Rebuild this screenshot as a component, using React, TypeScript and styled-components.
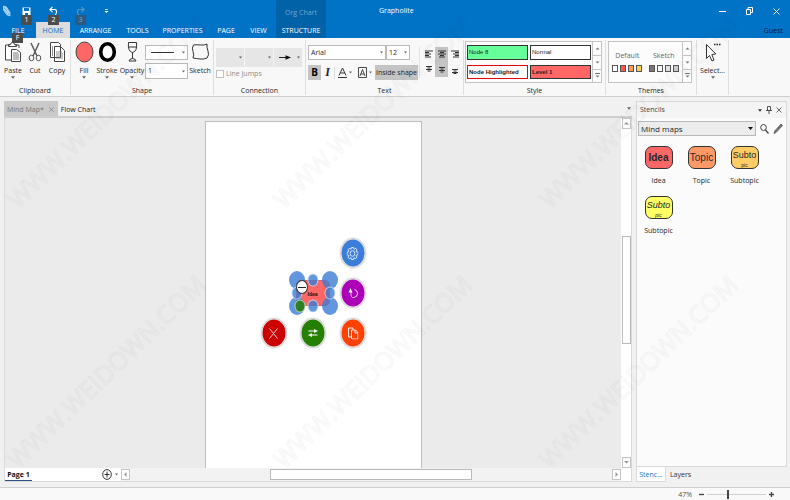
import React from "react";
import styled, { createGlobalStyle, css } from "styled-components";

const Global = createGlobalStyle`
  *, *::before, *::after { box-sizing: border-box; }
  body { margin: 0; font-family: "Open Sans", sans-serif; font-size: 7px; line-height: 10px; color: #262626; }
  button, input, select { font: inherit; color: inherit; margin: 0; padding: 0; }
  button { border: 0; background: none; white-space: nowrap; }
  svg { display: block; flex: none; }
  h2 { margin: 0; font: inherit; }
`;

const Window = styled.div`
  position: relative;
  display: flex;
  flex-direction: column;
  min-height: 100vh;
  background: #f1f1f1;
  overflow: hidden;
`;

/* ---------- title bar ---------- */
const Header = styled.header`
  display: flex;
  height: 38px;
  background: #0173c7;
  color: #fff;
`;
const HeaderStart = styled.div`
  display: flex;
  flex-direction: column;
  width: 276px;
`;
const HeaderRow = styled.div`
  display: flex;
  align-items: center;
  height: 22px;
`;
const QuickButton = styled.button<{ $dim?: boolean; $w?: number }>`
  position: relative;
  display: grid;
  place-items: center;
  width: ${(p) => p.$w ?? 27}px;
  height: 20px;
  color: ${(p) => (p.$dim ? "#5795c4" : "#fff")};
`;
const KeyTip = styled.span<{ $dim?: boolean; $low?: boolean }>`
  position: absolute;
  top: ${(p) => (p.$low ? 11 : 14)}px;
  left: ${(p) => (p.$low ? 12 : 8)}px;
  width: 11px;
  height: 10px;
  background: ${(p) => (p.$dim ? "#2d5a80" : "#4c4c4c")};
  color: ${(p) => (p.$dim ? "#7fa5c4" : "#fff")};
  font-size: 7px;
  line-height: 10px;
  text-align: center;
  z-index: 1;
`;
const Tabs = styled.nav`
  display: flex;
  height: 16px;
`;
const RibbonTab = styled.button<{ $w: number; $active?: boolean }>`
  position: relative;
  width: ${(p) => p.$w}px;
  height: 16px;
  font-size: 7px;
  line-height: 18px;
  text-align: center;
  background: ${(p) => (p.$active ? "#dcdcdc" : "transparent")};
  color: ${(p) => (p.$active ? "#0173c7" : "#fff")};
`;
const ContextTabs = styled.div`
  display: flex;
  flex-direction: column;
  width: 50px;
  background: #0262a7;
  text-align: center;
`;
const ContextTitle = styled.span`
  height: 22px;
  line-height: 25px;
  color: #71a8d2;
`;
const AppTitle = styled.div`
  flex: 1;
  padding-left: 53px;
  line-height: 22px;
`;
const HeaderEnd = styled.div`
  display: flex;
  flex-direction: column;
  align-items: flex-end;
`;
const WindowButton = styled.button`
  display: grid;
  place-items: center;
  width: 27px;
  height: 21px;
  color: #fff;
`;
const UserButton = styled.button`
  display: flex;
  align-items: center;
  gap: 3px;
  height: 16px;
  padding: 2px 1px 0 0;
  color: #101c2c;
`;

/* ---------- ribbon ---------- */
const Ribbon = styled.section`
  display: flex;
  height: 59px;
  padding-top: 2px;
  background: #f8f8f8;
  border-bottom: 1px solid #cfcfcf;
`;
const Group = styled.section<{ $w: number }>`
  display: flex;
  flex-direction: column;
  flex: none;
  width: ${(p) => p.$w}px;
  height: 55px;
  border-right: 1px solid #dedede;
`;
const GroupBody = styled.div<{ $pad?: number }>`
  display: flex;
  flex: none;
  height: 45px;
  padding-left: ${(p) => p.$pad ?? 1}px;
`;
const GroupTitle = styled.h2`
  line-height: 12px;
  text-align: center;
`;
const Tool = styled.button<{ $w: number }>`
  display: flex;
  flex-direction: column;
  align-items: center;
  width: ${(p) => p.$w}px;
  padding-top: 1px;
`;
const ToolIcon = styled.span`
  display: grid;
  place-items: center;
  height: 22px;
`;
const ToolLabel = styled.span`
  height: 13px;
  line-height: 15px;
`;
const Stack = styled.div<{ $gap?: number; $top?: number }>`
  display: flex;
  flex-direction: column;
  gap: ${(p) => p.$gap ?? 3}px;
  padding-top: ${(p) => p.$top ?? 5}px;
`;
const Row = styled.div`
  display: flex;
  align-items: center;
`;
const SelectBox = styled.label<{ $w?: number; $h: number; $tone?: "flat" | "grey" }>`
  display: grid;
  align-items: center;
  ${(p) => (p.$w ? `width: ${p.$w}px;` : "flex: 1;")}
  height: ${(p) => p.$h}px;
  border: 1px solid #b9b9b9;
  background: #fff;
  ${(p) =>
    p.$tone === "flat" &&
    css`
      background: #e6e6e6;
      border-color: #e6e6e6 #f4f4f4 #e6e6e6 #e6e6e6;
    `}
  ${(p) =>
    p.$tone === "grey" &&
    css`
      background: #ececec;
    `}
  & > * { grid-area: 1 / 1; }
  & > svg:last-child { justify-self: end; margin-right: 2px; pointer-events: none; }
`;
const SelectInput = styled.select<{ $big?: boolean }>`
  appearance: none;
  width: 100%;
  height: 100%;
  border: 0;
  padding: 0 2px;
  background: transparent;
  font-size: ${(p) => (p.$big ? 8 : 7)}px;
`;
const LineSample = styled.svg`
  margin-left: 4px;
  pointer-events: none;
`;
const CheckLabel = styled.label`
  display: flex;
  align-items: center;
  gap: 2px;
  color: #8d8d8d;
`;
const Check = styled.input`
  appearance: none;
  width: 8px;
  height: 8px;
  border: 1px solid #c3c3c3;
  background: #fbfbfb;
`;
const TextButton = styled.button<{ $w: number; $on?: boolean }>`
  display: flex;
  align-items: center;
  justify-content: center;
  gap: 2px;
  width: ${(p) => p.$w}px;
  height: 15px;
  background: ${(p) => (p.$on ? "#c4c4c4" : "transparent")};
`;
const Bold = styled.b`
  font: bold 10px/15px "Open Sans", sans-serif;
  color: #000;
`;
const Italic = styled.i`
  font: italic bold 12px/15px "Liberation Serif", serif;
`;
const Rule = styled.span`
  width: 1px;
  height: 12px;
  background: #dcdcdc;
`;
const AlignGrid = styled.div`
  display: grid;
  grid-template-columns: repeat(3, 13px);
  grid-template-rows: repeat(2, 15px);
  margin: 7px 0 0 1px;
  height: 31px;
  padding-left: 2px;
  border-left: 1px solid #e2e2e2;
`;
const AlignButton = styled.button<{ $on?: boolean }>`
  display: grid;
  place-items: center;
  background: ${(p) => (p.$on ? "#c4c4c4" : "transparent")};
`;
const Gallery = styled.div<{ $w: number }>`
  display: flex;
  width: ${(p) => p.$w}px;
  height: 42px;
  margin-top: 1px;
  border: 1px solid #c4c4c4;
  background: #fcfcfc;
`;
const StyleGrid = styled.div`
  flex: 1;
  display: grid;
  grid-template-columns: 1fr 1fr;
  gap: 5px 2px;
  padding: 3px 1px 3px;
`;
const StyleSwatch = styled.button<{ $bg: string; $line: string; $bold?: boolean }>`
  background: ${(p) => p.$bg};
  border: 1px solid ${(p) => p.$line};
  padding-left: 1px;
  text-align: left;
  font: ${(p) => (p.$bold ? "bold" : "normal")} 6px/12px "Liberation Sans", sans-serif;
  color: #222;
`;
const Spinner = styled.div`
  display: grid;
  grid-template-rows: repeat(3, 1fr);
  width: 9px;
  border-left: 1px solid #c4c4c4;
`;
const SpinButton = styled.button`
  display: grid;
  place-items: center;
  color: #777;
  & + & { border-top: 1px solid #c4c4c4; }
`;
const ThemeChoice = styled.button`
  flex: 1;
  display: flex;
  flex-direction: column;
  align-items: center;
  gap: 4px;
  padding-top: 9px;
  color: #666;
`;
const ColorChips = styled.span`
  display: flex;
  gap: 2px;
`;
const Chip = styled.span<{ $c: string }>`
  width: 6px;
  height: 7px;
  border: 1px solid #555;
  background: ${(p) => p.$c};
`;

/* ---------- work area ---------- */
const Work = styled.main`
  flex: 1;
  display: flex;
  gap: 4px;
  padding: 4px 3px 5px 4px;
`;
const Editor = styled.section`
  flex: 1;
  min-width: 0;
  display: flex;
  flex-direction: column;
`;
const DocTabs = styled.div`
  display: flex;
  align-items: center;
  height: 17px;
  padding-right: 1px;
  border-bottom: 2px solid #cecece;
`;
const DocTab = styled.button<{ $active?: boolean }>`
  display: flex;
  align-items: center;
  gap: 5px;
  height: 15px;
  padding: 2px 4px 0 3px;
  background: ${(p) => (p.$active ? "#c9c9c9" : "transparent")};
  color: ${(p) => (p.$active ? "#777" : "#222")};
`;
const Push = styled.span`
  flex: 1;
`;
const CanvasRow = styled.div`
  flex: 1;
  display: flex;
  border: 1px solid #dadada;
  border-width: 0 1px 0 1px;
`;
const Canvas = styled.div`
  flex: 1;
  display: flex;
  justify-content: center;
  padding-top: 3px;
  background: #ebebeb;
`;
const Sheet = styled.div`
  position: relative;
  width: 217px;
  border: 1px solid #bdbdbd;
  border-bottom: 0;
  background: #fff;
`;
const VScroll = styled.div`
  display: flex;
  flex-direction: column;
  align-items: center;
  width: 10px;
  background: #fff;
`;
const ScrollButton = styled.button`
  display: grid;
  place-items: center;
  width: 9px;
  height: 11px;
  border: 1px solid #c4c4c4;
  background: #fff;
  color: #999;
`;
const TrackV = styled.div`
  flex: 1;
  display: flex;
  flex-direction: column;
  width: 9px;
`;
const ThumbV = styled.div`
  height: 33%;
  margin-top: 107px;
  border: 1px solid #b9b9b9;
  background: #fff;
`;
const Footer = styled.div`
  display: flex;
  align-items: center;
  height: 14px;
  border: 1px solid #dadada;
  border-top: 0;
  background: #f2f2f2;
`;
const PageBar = styled.div`
  display: flex;
  align-items: center;
  width: 116px;
  height: 13px;
  background: #fff;
`;
const PageTab = styled.button`
  width: 27px;
  height: 13px;
  margin-right: 70px;
  border-bottom: 1px solid #2a4f86;
  font-weight: bold;
  line-height: 14px;
  color: #111;
`;
const AddPage = styled.button`
  display: flex;
  align-items: center;
  gap: 3px;
`;
const TrackH = styled.div`
  flex: 1;
  display: flex;
  justify-content: center;
`;
const ThumbH = styled.div`
  width: 42%;
  height: 11px;
  border: 1px solid #b9b9b9;
  background: #fff;
`;
const Corner = styled.span`
  width: 10px;
  height: 13px;
  background: #fff;
`;

/* ---------- diagram ---------- */
const Place = css<{ $x: number; $y: number }>`
  position: absolute;
  left: ${(p) => p.$x}px;
  top: ${(p) => p.$y}px;
  transform: translate(-50%, -50%);
`;
const IdeaNode = styled.div<{ $x: number; $y: number }>`
  ${Place}
  width: 34px;
  height: 26px;
  border-radius: 5px;
  border: 1px solid #df5f63;
  background: #ff6666;
`;
const NodeText = styled.span<{ $x: number; $y: number }>`
  ${Place}
  font: bold 5px/8px "Liberation Sans", sans-serif;
  color: #111;
`;
const Handle = styled.span<{ $x: number; $y: number; $big?: boolean; $green?: boolean }>`
  ${Place}
  width: ${(p) => (p.$big ? 16 : 11)}px;
  height: ${(p) => (p.$big ? 18 : 13)}px;
  border-radius: 50%;
  border: ${(p) => (p.$big ? "0" : "1px solid rgba(255,255,255,.6)")};
  background: ${(p) => (p.$green ? "#2f7f22" : "rgba(59,125,213,.8)")};
`;
const Collapse = styled.button<{ $x: number; $y: number }>`
  ${Place}
  display: grid;
  place-items: center;
  width: 12px;
  height: 14px;
  border-radius: 50%;
  border: 1px solid #333;
  background: #fff;
`;
const NodeAction = styled.button<{ $x: number; $y: number; $c: string }>`
  ${Place}
  display: grid;
  place-items: center;
  width: 25px;
  height: 29px;
  border-radius: 50%;
  border: 1px solid #e4e4e4;
  background: ${(p) => p.$c};
  box-shadow: 0 0 2px #999;
  color: #fff;
`;

/* ---------- stencils ---------- */
const Side = styled.aside`
  display: flex;
  flex-direction: column;
  width: 151px;
`;
const Panel = styled.div`
  flex: 1;
  border: 1px solid #d9d9d9;
  background: #fbfbfb;
`;
const PanelHead = styled.div`
  display: flex;
  align-items: center;
  gap: 4px;
  height: 16px;
  padding: 0 4px 0 3px;
  background: #f4f4f4;
  color: #444;
`;
const Grip = styled.span`
  flex: 1;
  height: 4px;
  background-image: radial-gradient(#c6c6c6 35%, transparent 40%);
  background-size: 2px 2px;
`;
const IconButton = styled.button`
  display: grid;
  place-items: center;
  color: #444;
`;
const Picker = styled.div`
  display: flex;
  align-items: center;
  gap: 4px;
  padding: 3px 3px 0 1px;
`;
const StencilGrid = styled.div`
  display: grid;
  grid-template-columns: repeat(3, 43px);
  grid-auto-rows: 50px;
  padding-top: 10px;
`;
const StencilItem = styled.button`
  display: flex;
  flex-direction: column;
  align-items: center;
  gap: 7px;
`;
const Shape = styled.span<{ $c: string; $bold?: boolean; $slant?: boolean }>`
  width: 28px;
  height: 23px;
  border: 1px solid #333;
  border-radius: 7px;
  background: ${(p) => p.$c};
  text-align: center;
  font-family: "Liberation Sans", sans-serif;
  font-size: 10px;
  line-height: 22px;
  font-weight: ${(p) => (p.$bold ? "bold" : "normal")};
  font-style: ${(p) => (p.$slant ? "italic" : "normal")};
`;
const ShapeLine = styled.span<{ $second?: boolean }>`
  display: block;
  font-size: ${(p) => (p.$second ? 5 : 9)}px;
  line-height: ${(p) => (p.$second ? 5 : 16)}px;
`;
const SideTabs = styled.div`
  display: flex;
  height: 15px;
`;
const SideTab = styled.button<{ $active?: boolean }>`
  width: ${(p) => (p.$active ? 30 : 29)}px;
  border: 1px solid ${(p) => (p.$active ? "#dcdcdc" : "transparent")};
  border-top: 0;
  background: ${(p) => (p.$active ? "#fff" : "transparent")};
  color: ${(p) => (p.$active ? "#1979ca" : "#333")};
  line-height: 16px;
`;

/* ---------- status bar ---------- */
const Status = styled.footer`
  display: flex;
  align-items: center;
  justify-content: flex-end;
  gap: 3px;
  height: 13px;
  padding-right: 16px;
  border-top: 1px solid #cfcfcf;
  background: #f9f9f9;
  color: #555;
`;
const ZoomValue = styled.span`
  padding: 2px 4px 0 0;
`;
const Zoom = styled.input`
  appearance: none;
  width: 59px;
  height: 9px;
  background: linear-gradient(#cfcfcf, #cfcfcf) center / 100% 1px no-repeat;
  &::-webkit-slider-thumb {
    appearance: none;
    width: 2px;
    height: 9px;
    background: #444;
  }
`;
const Watermark = styled.svg`
  position: absolute;
  inset: 0;
  pointer-events: none;
`;

const Caret = ({ c = "#666", w = 5 }: { c?: string; w?: number }) => (
  <svg width={w} height="3" viewBox="0 0 5 3" aria-hidden="true">
    <path d="M0 0h5L2.5 3z" fill={c} />
  </svg>
);
const Tri = ({ d }: { d: string }) => (
  <svg width="5" height="5" viewBox="0 0 5 5" aria-hidden="true">
    <path d={d} fill="currentColor" />
  </svg>
);
const Cross = ({ s = 6 }: { s?: number }) => (
  <svg width={s} height={s} viewBox="0 0 6 6" stroke="currentColor" strokeWidth=".8" aria-hidden="true">
    <path d="M.5.5l5 5M5.5.5l-5 5" />
  </svg>
);
const Icon = ({ w, h, children }: { w: number; h: number; children: React.ReactNode }) => (
  <svg width={w} height={h} viewBox={`0 0 ${w} ${h}`} fill="none" stroke="currentColor" aria-hidden="true">
    {children}
  </svg>
);

type PickProps = { label: string; value: string; w?: number; h: number; tone?: "flat" | "grey"; big?: boolean; sample?: React.ReactNode };
const Pick = ({ label, value, w, h, tone, big, sample }: PickProps) => (
  <SelectBox $w={w} $h={h} $tone={tone}>
    {sample}
    <SelectInput aria-label={label} $big={big}>
      <option>{value}</option>
    </SelectInput>
    <Caret w={big ? 5 : 3} c={big ? "#111" : "#666"} />
  </SelectBox>
);

const ToolButton = ({ label, w, arrow, children }: { label: string; w: number; arrow?: boolean; children: React.ReactNode }) => (
  <Tool $w={w}>
    <ToolIcon>{children}</ToolIcon>
    <ToolLabel>{label}</ToolLabel>
    {arrow && <Caret w={4} />}
  </Tool>
);

const Spin = () => (
  <Spinner>
    <SpinButton aria-label="Previous"><Tri d="M.5 3.5h4L2.5 1.5z" /></SpinButton>
    <SpinButton aria-label="Next"><Tri d="M.5 1.5h4L2.5 3.5z" /></SpinButton>
    <SpinButton aria-label="More"><Tri d="M0 0h5v1H0zM.5 2.5h4L2.5 4.5z" /></SpinButton>
  </Spinner>
);

const menu: [string, number][] = [["ARRANGE", 51], ["TOOLS", 33], ["PROPERTIES", 57], ["PAGE", 30], ["VIEW", 35]];
const alignments = [
  ["Top left", "M0 1h8M0 2.5h4M0 4h6M0 5.5h4M0 7h6"],
  ["Top centre", "M0 1h8M2 2.5h4M0 4h8M2 5.5h4M1 7h6"],
  ["Top right", "M0 1h8M4 2.5h4M2 4h6M4 5.5h4M2 7h6"],
  ["Middle left", "M1 1.5h6M2.5 3h3M1 4.5h6M2.5 6h3"],
  ["Middle centre", "M1 2.5h6M2.5 4h3M1 5.5h6M2.5 7h3"],
  ["Middle right", "M1 4.5h6M2.5 6h3M1 7.5h6M2.5 8.5h3"],
];
const stencils = [
  { name: "Idea", color: "#ff6666", bold: true },
  { name: "Topic", color: "#ff9966" },
  { name: "Subtopic", color: "#ffcc66", lines: ["Subto", "pic"] },
  { name: "Subtopic", color: "#ffff66", lines: ["Subto", "pic"], slant: true },
];

function QuickTools() {
  return (
    <>
      <QuickButton aria-label="Grapholite menu" $w={13}>
        <svg width="8" height="12" viewBox="0 0 8 12" aria-hidden="true">
          <path d="M.5 1l3 1L7 7.5V11l-3-1L.5 5z" fill="#6db1ea" stroke="#d3e8fa" strokeWidth=".7" />
          <path d="M2 2l4 6M1 4l4 5" stroke="#fff" strokeWidth=".6" />
        </svg>
      </QuickButton>
      <QuickButton aria-label="Save">
        <svg width="9" height="9" viewBox="0 0 9 9" aria-hidden="true">
          <path d="M.5.5h8v8h-8z" fill="#fff" />
          <path d="M2 1h5v3H2zM3 6h3v3H3z" fill="#0173c7" />
        </svg>
        <KeyTip>1</KeyTip>
      </QuickButton>
      <QuickButton aria-label="Undo">
        <Icon w={9} h={11}><path d="M1 3.5h4.5q2.5.2 2 3T4.5 10M3.5.8L.9 3.5l2.6 2.7" strokeWidth="1.2" /></Icon>
        <KeyTip>2</KeyTip>
      </QuickButton>
      <QuickButton aria-label="Redo" $dim>
        <Icon w={9} h={11}><path d="M8 3.5H3.5Q1 3.7 1.5 6.5T4.5 10M5.5.8l2.6 2.7-2.6 2.7" strokeWidth="1.2" /></Icon>
        <KeyTip $dim>3</KeyTip>
      </QuickButton>
      <QuickButton aria-label="Customize" $w={24}><Tri d="M1 0h3v.8H1zM.5 2h4L2.5 4z" /></QuickButton>
    </>
  );
}

function TitleBar() {
  return (
    <Header>
      <HeaderStart>
        <HeaderRow>
          <QuickTools />
        </HeaderRow>
        <Tabs>
          <RibbonTab $w={36}>FILE<KeyTip $low>F</KeyTip></RibbonTab>
          <RibbonTab $w={34} $active>HOME</RibbonTab>
          {menu.map(([name, w]) => <RibbonTab key={name} $w={w}>{name}</RibbonTab>)}
        </Tabs>
      </HeaderStart>
      <ContextTabs>
        <ContextTitle>Org Chart</ContextTitle>
        <RibbonTab $w={50}>STRUCTURE</RibbonTab>
      </ContextTabs>
      <AppTitle>Grapholite</AppTitle>
      <HeaderEnd>
        <HeaderRow>
          <WindowButton aria-label="Minimize"><Icon w={7} h={7}><path d="M0 3.5h7" /></Icon></WindowButton>
          <WindowButton aria-label="Restore"><Icon w={7} h={8}><path d="M.5 2.5h4v5h-4zM2 2V.5h4.5v5H5" /></Icon></WindowButton>
          <WindowButton aria-label="Close"><Cross s={7} /></WindowButton>
        </HeaderRow>
        <UserButton>Guest<Caret c="#24639a" w={3} /></UserButton>
      </HeaderEnd>
    </Header>
  );
}

function RibbonBar() {
  return (
    <Ribbon>
      <Group $w={71}>
        <GroupBody $pad={2}>
          <ToolButton label="Paste" w={22} arrow>
            <Icon w={16} h={20}>
              <path d="M5 3H.5v15H6M10 3h4v3M3.5 4.5v-2h2Q5.5.5 7.5.5t2 2h2v2z" fill="#fff" stroke="#444" />
              <path d="M6.5 7.5h5l4 3v9h-9z" fill="#fff" stroke="#444" />
              <path d="M8 11h5M8 13h6M8 15h6M8 17h6" stroke="#555" strokeWidth=".8" />
            </Icon>
          </ToolButton>
          <ToolButton label="Cut" w={22}>
            <Icon w={14} h={20}>
              <path d="M3 1l6 13M11 1L5 14" stroke="#555" strokeWidth="1.4" />
              <ellipse cx="3.5" cy="16" rx="2.3" ry="2.8" stroke="#555" />
              <ellipse cx="10.5" cy="16" rx="2.3" ry="2.8" stroke="#555" />
            </Icon>
          </ToolButton>
          <ToolButton label="Copy" w={22}>
            <Icon w={15} h={20}>
              <path d="M.5.5h8l2 2v13H.5zM4.5 4.5h6l4 4v11h-10z" fill="#fff" stroke="#444" />
              <path d="M6 10h6M6 12h7M6 14h7M6 16h7M2.5 4v10" stroke="#777" strokeWidth=".8" />
            </Icon>
          </ToolButton>
        </GroupBody>
        <GroupTitle>Clipboard</GroupTitle>
      </Group>

      <Group $w={143}>
        <GroupBody $pad={2}>
          <ToolButton label="Fill" w={22} arrow>
            <Icon w={19} h={22}><ellipse cx="9.5" cy="11" rx="8.5" ry="10" fill="#ff6666" stroke="#444" /></Icon>
          </ToolButton>
          <ToolButton label="Stroke" w={24} arrow>
            <Icon w={19} h={22}><ellipse cx="9.5" cy="11" rx="6.8" ry="8.3" fill="#fff" stroke="#000" strokeWidth="3.6" /></Icon>
          </ToolButton>
          <ToolButton label="Opacity" w={26} arrow>
            <Icon w={11} h={20}><path d="M1.5.5h8q1 9-4 10-5-1-4-10zM1 5h9M5.5 10.5v6M2 19q0-2 3.5-2.5Q9 17 9 19z" stroke="#333" /></Icon>
          </ToolButton>
          <Stack>
            <Pick label="Line style" value="" w={43} h={15} sample={<LineSample width="25" height="3" viewBox="0 0 25 3"><path d="M1 1.5h23" stroke="#333" /></LineSample>} />
            <Pick label="Line width" value="1" w={43} h={16} />
          </Stack>
          <ToolButton label="Sketch" w={24}>
            <Icon w={17} h={18}><path d="M1.5 2q3-.5 7 0t6.5-1q-.5 3 1 7t-1 7q-3 1.5-7 1T1 15q1.5-3 0-6.5T1.5 2z" stroke="#333" /></Icon>
          </ToolButton>
        </GroupBody>
        <GroupTitle>Shape</GroupTitle>
      </Group>

      <Group $w={92}>
        <GroupBody $pad={2}>
          <Stack $top={8} $gap={2}>
            <Row>
              <Pick label="Connector start" value="" w={29} h={19} tone="flat" />
              <Pick label="Connector type" value="" w={29} h={19} tone="flat" />
              <Pick
                label="Connector end"
                value=""
                w={29}
                h={19}
                tone="flat"
                sample={<LineSample width="13" height="7" viewBox="0 0 14 7"><path d="M0 3.5h9" stroke="#111" /><path d="M7 1l6 2.5L7 6z" fill="#111" /></LineSample>}
              />
            </Row>
            <CheckLabel><Check type="checkbox" />Line Jumps</CheckLabel>
          </Stack>
        </GroupBody>
        <GroupTitle>Connection</GroupTitle>
      </Group>

      <Group $w={158}>
        <GroupBody $pad={2}>
          <Stack $gap={5}>
            <Row>
              <Pick label="Font" value="Arial" w={78} h={15} />
              <Pick label="Font size" value="12" w={24} h={15} />
            </Row>
            <Row>
              <TextButton $w={13} $on aria-label="Bold"><Bold>B</Bold></TextButton>
              <TextButton $w={13} aria-label="Italic"><Italic>I</Italic></TextButton>
              <Rule />
              <TextButton $w={20} aria-label="Text colour">
                <Icon w={9} h={11}><path d="M1 8.5L4.5 1 8 8.5M2.3 6h4.4M0 10.5h9" stroke="#333" /></Icon><Caret w={3} />
              </TextButton>
              <TextButton $w={20} aria-label="Text background">
                <Icon w={9} h={11}><path d="M.5.5h8v10h-8zM2 9l2.5-6.5L7 9M3 7h3" stroke="#333" strokeWidth=".9" /></Icon><Caret w={3} />
              </TextButton>
              <TextButton $w={43} $on>Inside shape</TextButton>
            </Row>
          </Stack>
          <AlignGrid>
            {alignments.map(([name, d], i) => (
              <AlignButton key={name} $on={i % 3 === 1} aria-label={name}><Icon w={8} h={9}><path d={d} stroke="#333" /></Icon></AlignButton>
            ))}
          </AlignGrid>
        </GroupBody>
        <GroupTitle>Text</GroupTitle>
      </Group>

      <Group $w={142}>
        <GroupBody $pad={1}>
          <Gallery $w={137}>
            <StyleGrid>
              <StyleSwatch $bg="#66ff99" $line="#333">Node 8</StyleSwatch>
              <StyleSwatch $bg="#fff" $line="#333">Normal</StyleSwatch>
              <StyleSwatch $bg="#fff" $line="#e8000c" $bold>Node Highlighted</StyleSwatch>
              <StyleSwatch $bg="#ff6666" $line="#333" $bold>Level 1</StyleSwatch>
            </StyleGrid>
            <Spin />
          </Gallery>
        </GroupBody>
        <GroupTitle>Style</GroupTitle>
      </Group>

      <Group $w={91}>
        <GroupBody $pad={2}>
          <Gallery $w={84}>
            <ThemeChoice>Default<ColorChips>{["#fff", "#ff5555", "#ff9955", "#ffcc55"].map((c) => <Chip key={c} $c={c} />)}</ColorChips></ThemeChoice>
            <ThemeChoice>Sketch<ColorChips>{["#777", "#f6f6f6", "#e2e2e2", "#ccc"].map((c) => <Chip key={c} $c={c} />)}</ColorChips></ThemeChoice>
            <Spin />
          </Gallery>
        </GroupBody>
        <GroupTitle>Themes</GroupTitle>
      </Group>

      <Group $w={32}>
        <GroupBody $pad={1}>
          <ToolButton label="Select..." w={29} arrow>
            <Icon w={16} h={20}>
              <path d="M1.5 2.5v14l3-3 2.5 5.5 2-1L6.8 12.5l4-.5z" fill="#fff" stroke="#333" />
              <path d="M9 2.5h6.5" stroke="#222" strokeWidth="1.3" strokeDasharray="1.5 1" />
            </Icon>
          </ToolButton>
        </GroupBody>
      </Group>
    </Ribbon>
  );
}

const corners = [[91, 158], [124, 158], [91, 184], [124, 184]];
const sides = [[107, 158], [91, 171], [124, 171], [107, 184]];

function Diagram() {
  return (
    <Sheet>
      <IdeaNode $x={107} $y={171} />
      {corners.map(([x, y]) => <Handle key={`${x}-${y}`} $x={x} $y={y} $big />)}
      {sides.map(([x, y]) => <Handle key={`${x}-${y}`} $x={x} $y={y} />)}
      <Handle $x={94} $y={184} $green />
      <NodeText $x={107} $y={172}>Idea</NodeText>
      <Collapse $x={96} $y={165} aria-label="Collapse"><Icon w={8} h={3}><path d="M0 1.5h8" stroke="#222" /></Icon></Collapse>
      <NodeAction $x={147} $y={131} $c="#3b7dd8" aria-label="Settings">
        <Icon w={12} h={14}>
          <path d="M5 1h2l.5 1.8 1.7-1 1.3 1.6-1 1.6 2 .8v2.4l-2 .8 1 1.6-1.3 1.6-1.7-1L7 13H5l-.5-1.8-1.7 1-1.3-1.6 1-1.6-2-.8V5.8l2-.8-1-1.6 1.3-1.6 1.7 1z" strokeWidth=".8" />
          <ellipse cx="6" cy="7" rx="2.3" ry="2.8" strokeWidth=".8" />
        </Icon>
      </NodeAction>
      <NodeAction $x={147} $y={171} $c="#ab00b8" aria-label="Rotate">
        <Icon w={11} h={11}><path d="M7 2q3 .5 3 4T6.5 10 3.5 6V3" strokeWidth=".8" /><path d="M1 5l2-4.5L5 5z" fill="#fff" stroke="none" /></Icon>
      </NodeAction>
      <NodeAction $x={68} $y={211} $c="#cc0000" aria-label="Delete">
        <Icon w={10} h={12}><path d="M1 1l8 10M9 1L1 11" strokeWidth=".8" /></Icon>
      </NodeAction>
      <NodeAction $x={107} $y={211} $c="#268000" aria-label="Connect">
        <Icon w={11} h={9}><path d="M1 2.5h6M4 6.5h6" strokeWidth="1.2" /><path d="M6.5.5L10.5 2.5l-4 2zM4.5 4.5l-4 2 4 2z" fill="#fff" stroke="none" /></Icon>
      </NodeAction>
      <NodeAction $x={147} $y={211} $c="#ff4000" aria-label="Duplicate">
        <Icon w={11} h={13}><path d="M4 10.5H1v-9h4.5V3M4 3.5h4l2.5 2.5v6.5H4zM7.5 3.5v3h3" strokeWidth=".9" /></Icon>
      </NodeAction>
    </Sheet>
  );
}

function EditorPane() {
  return (
    <Editor>
      <DocTabs>
        <DocTab $active>Mind Map*<Cross s={5} /></DocTab>
        <DocTab>Flow Chart</DocTab>
        <Push />
        <IconButton aria-label="Open documents"><Caret w={4} /></IconButton>
      </DocTabs>
      <CanvasRow>
        <Canvas><Diagram /></Canvas>
        <VScroll>
          <ScrollButton aria-label="Scroll up"><Tri d="M0 3.5h5L2.5 1z" /></ScrollButton>
          <TrackV><ThumbV /></TrackV>
          <ScrollButton aria-label="Scroll down"><Tri d="M0 1h5L2.5 3.5z" /></ScrollButton>
        </VScroll>
      </CanvasRow>
      <Footer>
        <PageBar>
          <PageTab>Page 1</PageTab>
          <AddPage aria-label="Add page">
            <Icon w={10} h={11}><ellipse cx="5" cy="5.5" rx="4.3" ry="4.9" stroke="#333" /><path d="M2.5 5.5h5M5 2.5v6" stroke="#333" /></Icon>
            <Caret w={3} />
          </AddPage>
        </PageBar>
        <ScrollButton aria-label="Scroll left"><Tri d="M3.5 0v5L1 2.5z" /></ScrollButton>
        <TrackH><ThumbH /></TrackH>
        <ScrollButton aria-label="Scroll right"><Tri d="M1.5 0v5L4 2.5z" /></ScrollButton>
        <Corner />
      </Footer>
    </Editor>
  );
}

function StencilPane() {
  return (
    <Side>
      <Panel>
        <PanelHead>
          <span>Stencils</span>
          <Grip />
          <IconButton aria-label="Panel options"><Caret w={4} c="#333" /></IconButton>
          <IconButton aria-label="Pin"><Icon w={6} h={8}><path d="M1.5.5h3v4h-3zM0 4.5h6M3 5v3" strokeWidth=".9" /></Icon></IconButton>
          <IconButton aria-label="Close panel"><Cross s={6} /></IconButton>
        </PanelHead>
        <Picker>
          <Pick label="Stencil set" value="Mind maps" h={15} tone="grey" big />
          <IconButton aria-label="Search"><Icon w={9} h={10}><ellipse cx="3.5" cy="3.5" rx="2.8" ry="3" /><path d="M5.5 6l3 3.5" strokeWidth="1.3" /></Icon></IconButton>
          <IconButton aria-label="Edit"><Icon w={10} h={11}><path d="M1 10.5l.8-2.5L8 1l1.5 1.5L3 9.5z" fill="#777" stroke="#555" strokeWidth=".8" /></Icon></IconButton>
        </Picker>
        <StencilGrid>
          {stencils.map(({ name, color, bold, lines, slant }) => (
            <StencilItem key={color}>
              <Shape $c={color} $bold={bold} $slant={slant}>
                {lines ? lines.map((line, i) => <ShapeLine key={line} $second={i > 0}>{line}</ShapeLine>) : name}
              </Shape>
              {name}
            </StencilItem>
          ))}
        </StencilGrid>
      </Panel>
      <SideTabs>
        <SideTab $active>Stenc...</SideTab>
        <SideTab>Layers</SideTab>
      </SideTabs>
    </Side>
  );
}

export default function App() {
  return (
    <Window>
      <Global />
      <TitleBar />
      <RibbonBar />
      <Work>
        <EditorPane />
        <StencilPane />
      </Work>
      <Status>
        <ZoomValue>47%</ZoomValue>
        <IconButton aria-label="Zoom out"><Icon w={5} h={5}><path d="M0 2.5h5" strokeWidth="1.3" /></Icon></IconButton>
        <Zoom type="range" min="0" max="100" defaultValue="35" aria-label="Zoom" />
        <IconButton aria-label="Zoom in"><Icon w={5} h={5}><path d="M0 2.5h5M2.5 0v5" strokeWidth="1.3" /></Icon></IconButton>
      </Status>
      <Watermark width="100%" height="100%" aria-hidden="true">
        <defs>
          <pattern id="mark" width="266" height="260" patternUnits="userSpaceOnUse" y="-44">
            <text x="18" y="254" transform="rotate(-44 18 254)" fontFamily="Open Sans, sans-serif" fontSize="25" fill="none" stroke="#000" strokeOpacity=".04">WWW.WEIDOWN.COM</text>
          </pattern>
        </defs>
        <rect width="100%" height="100%" fill="url(#mark)" />
      </Watermark>
    </Window>
  );
}
